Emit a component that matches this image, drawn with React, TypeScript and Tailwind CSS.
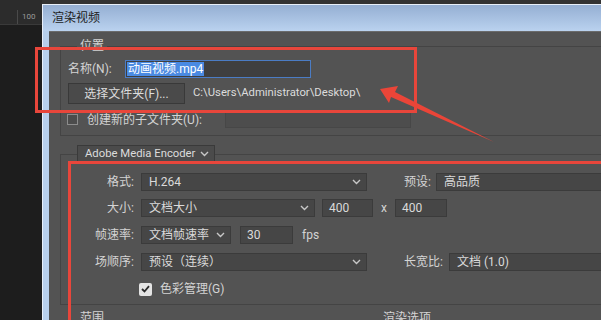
import React from 'react';

function Chevron() {
  return (
    <svg width="9" height="6" viewBox="0 0 9 6" className="shrink-0">
      <polyline points="1,1 4.5,4.5 8,1" fill="none" stroke="#c8c8c8" strokeWidth="1.4" />
    </svg>
  );
}

function Select({ value, width }: { value: string; width?: string }) {
  return (
    <div
      className={`${width ?? 'flex-1'} h-[18px] shrink-0 flex items-center justify-between pl-[7px] pr-[5px] bg-[#464646] border border-[#3b3b3b] text-[#dadada]`}
    >
      <span className="leading-none whitespace-nowrap">{value}</span>
      {width && <Chevron />}
    </div>
  );
}

function Field({ value, width }: { value: string; width: string }) {
  return (
    <div className={`${width} h-[18px] shrink-0 flex items-center pl-[6px] bg-[#464646] border border-[#3b3b3b] text-[#dadada]`}>
      <span className="leading-none">{value}</span>
    </div>
  );
}

function Label({ children }: { children: React.ReactNode }) {
  return <div className="w-[74px] shrink-0 text-right leading-none pr-[1px]">{children}</div>;
}

export default function App() {
  return (
    <div className="relative w-[601px] h-[320px] overflow-hidden flex bg-[#333333] text-[12px] text-[#d4d4d4] font-['Roboto','Noto_Sans_CJK_SC',sans-serif]">
      {/* canvas / ruler behind the dialog */}
      <div className="w-[42px] shrink-0 flex flex-col bg-[#1d1d1d]">
        <div className="h-[25px] flex items-end bg-[#2c2c2c] border-b border-[#3a3a3a]">
          <div className="h-[14px] w-[18px] border-r border-[#4a4a4a]" />
          <span className="ml-[4px] mb-[3px] text-[8px] leading-none text-[#9a9a9a]">100</span>
        </div>
      </div>

      {/* dialog */}
      <div className="flex-1 min-w-0 mt-[4px] flex flex-col border-l border-t border-[#e8eff9]">
        <div className="h-[26px] shrink-0 pl-[9px] flex items-center bg-gradient-to-b from-[#95afd3] to-[#bad2ef] text-[#1c1c1c]">
          渲染视频
        </div>
        <div className="flex-1 flex min-h-0">
          <div className="w-[6px] shrink-0 bg-[#b7cfec]" />
          <div className="flex-1 min-w-0 bg-[#535353] border-t border-[#6b6b6b] flex flex-col">
            {/* 位置 group */}
            <div className="ml-[11px] mt-[14px] w-[600px] shrink-0 flex flex-col border-l border-t border-b border-[#444444] pb-[7px]">
              <div className="-mt-[7px] ml-[16px] px-[3px] h-[13px] leading-[13px] w-fit bg-[#535353]">位置</div>
              <div className="ml-[7px] mt-[7px] h-[18px] flex items-center">
                <div className="w-[57px] shrink-0">名称(N):</div>
                <div className="w-[186px] h-[18px] flex items-center px-[1px] bg-[#3f3f3f] border border-[#4b7cc4]">
                  <span className="bg-[#4a8ae2] text-white leading-[14px] px-[1px]">动画视频.mp4</span>
                </div>
              </div>
              <div className="ml-[7px] mt-[5px] h-[21px] flex items-center">
                <div className="w-[117px] h-[21px] shrink-0 flex items-center justify-center bg-[#4a4a4a] border border-[#393939] text-[#dcdcdc]">
                  选择文件夹(F)...
                </div>
                <span className="ml-[8px] text-[11.3px] text-[#dcdcdc]">C:\Users\Administrator\Desktop\</span>
              </div>
              <div className="ml-[6px] mt-[7px] h-[17px] flex items-center">
                <div className="w-[11px] h-[11px] shrink-0 border border-[#8c8c8c] bg-[#4c4c4c]" />
                <div className="ml-[9px] w-[138px] shrink-0">创建新的子文件夹(U):</div>
                <div className="w-[186px] h-[17px] bg-[#4d4d4d] border border-[#474747]" />
              </div>
            </div>

            {/* encoder group */}
            <div className="ml-[11px] mt-[18px] w-[600px] shrink-0 flex flex-col border-l border-t border-b border-[#444444] pb-[6px]">
              <div className="-mt-[10px] ml-[16px] w-[138px] h-[18px] flex items-center justify-between pl-[7px] pr-[5px] bg-[#4b4b4b] border border-[#3a3a3a] text-[#dcdcdc]">
                <span className="leading-none whitespace-nowrap text-[11.3px]">Adobe Media Encoder</span>
                <Chevron />
              </div>

              <div className="mt-[10px] h-[18px] flex items-center">
                <Label>格式:</Label>
                <div className="w-[6px] shrink-0" />
                <Select value="H.264" width="w-[226px]" />
                <div className="ml-[37px] w-[32px] shrink-0 leading-none">预设:</div>
                <Select value="高品质" />
              </div>

              <div className="mt-[8px] h-[18px] flex items-center">
                <Label>大小:</Label>
                <div className="w-[6px] shrink-0" />
                <Select value="文档大小" width="w-[174px]" />
                <div className="w-[7px] shrink-0" />
                <Field value="400" width="w-[51px]" />
                <span className="ml-[8px] w-[14px] shrink-0 leading-none">x</span>
                <Field value="400" width="w-[52px]" />
              </div>

              <div className="mt-[9px] h-[18px] flex items-center">
                <Label>帧速率:</Label>
                <div className="w-[6px] shrink-0" />
                <Select value="文档帧速率" width="w-[90px]" />
                <div className="w-[9px] shrink-0" />
                <Field value="30" width="w-[53px]" />
                <span className="ml-[9px] leading-none">fps</span>
              </div>

              <div className="mt-[9px] h-[18px] flex items-center">
                <Label>场顺序:</Label>
                <div className="w-[6px] shrink-0" />
                <Select value="预设（连续）" width="w-[226px]" />
                <div className="ml-[37px] w-[45px] shrink-0 leading-none">长宽比:</div>
                <Select value="文档 (1.0)" />
              </div>

              <div className="mt-[9px] h-[18px] flex items-center">
                <div className="ml-[78px] w-[13px] h-[13px] shrink-0 flex items-center justify-center bg-[#e4e4e4] rounded-[2px]">
                  <svg width="9" height="8" viewBox="0 0 9 8">
                    <polyline points="1,4 3.5,6.5 8,1.2" fill="none" stroke="#2a2a2a" strokeWidth="1.8" />
                  </svg>
                </div>
                <span className="ml-[8px] leading-none">色彩管理(G)</span>
              </div>
            </div>

            <div className="mt-[7px] flex leading-none">
              <span className="ml-[31px] w-[303px] shrink-0">范围</span>
              <span>渲染选项</span>
            </div>
          </div>
        </div>
      </div>

      {/* red annotations */}
      <div className="absolute left-[35px] top-[47px] w-[382px] h-[66px] border-[3px] border-[#e8463b]" />
      <div className="absolute left-[68px] top-[161px] w-[560px] h-[200px] border-[3px] border-[#e8463b]" />
      <svg className="absolute left-0 top-0" width="601" height="320" viewBox="0 0 601 320">
        <polygon points="380,89 398,86 395,92 494,142 391,97 389,103" fill="#ea4538" />
      </svg>
    </div>
  );
}
